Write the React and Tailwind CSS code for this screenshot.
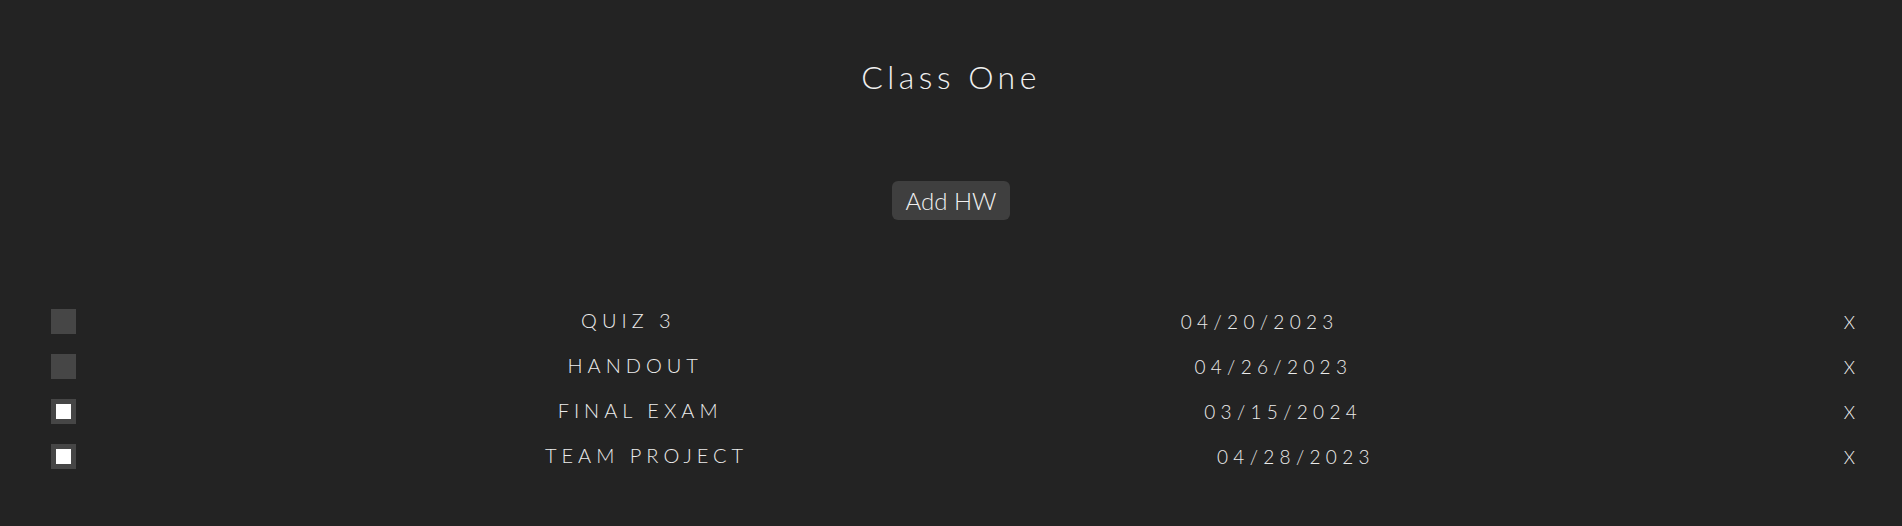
import { useState } from "react";

const initialHomework = [
  { id: 1, name: "Quiz 3", due: "04/20/2023", done: false },
  { id: 2, name: "Handout", due: "04/26/2023", done: false },
  { id: 3, name: "Final Exam", due: "03/15/2024", done: true },
  { id: 4, name: "Team Project", due: "04/28/2023", done: true },
];

const Check = ({ checked, onClick }) => (
  <button
    onClick={onClick}
    className="w-[25px] h-[25px] bg-[#464646] flex items-center justify-center shrink-0"
  >
    {checked && <span className="block w-[15px] h-[15px] bg-white" />}
  </button>
);

export default function App() {
  const [items, setItems] = useState(initialHomework);

  const toggle = (id) =>
    setItems(items.map((it) => (it.id === id ? { ...it, done: !it.done } : it)));
  const remove = (id) => setItems(items.filter((it) => it.id !== id));

  return (
    <div className="min-h-screen bg-[#232323] text-[#f0f0f0] font-['Lato','Liberation_Sans',sans-serif] font-light">
      {/* Header */}
      <h1 className="pt-[57px] text-center text-[32px] leading-[40px] tracking-[0.14em]">
        Class One
      </h1>

      <div className="mt-[84px] flex justify-center">
        <button className="h-[39px] px-[14px] rounded-md bg-[#3f3f3f] text-[24px] leading-none text-[#f0f0f0]">
          Add HW
        </button>
      </div>

      {/* Homework list */}
      <ul className="mt-[89px] pl-[51px] pr-[47px] flex flex-col gap-[20px]">
        {items.map((hw) => (
          <li key={hw.id} className="h-[25px] flex items-center justify-between">
            <Check checked={hw.done} onClick={() => toggle(hw.id)} />
            <span className="uppercase text-[20px] leading-none -mt-[3px] tracking-[0.25em] text-[#ececec]">{hw.name}</span>
            <span className="text-[19px] leading-none tracking-[0.28em] text-[#ececec]">{hw.due}</span>
            <button onClick={() => remove(hw.id)} className="text-[18px] leading-none text-[#f2f2f2]">
              X
            </button>
          </li>
        ))}
      </ul>
    </div>
  );
}
